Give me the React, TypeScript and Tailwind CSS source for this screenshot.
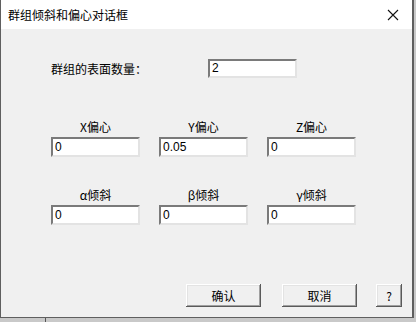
const cjk = "font-['Noto_Sans_CJK_SC','Liberation_Sans',sans-serif]";

function Field({ label, value }: { label: string; value: string }) {
  return (
    <div className="flex w-[89px] flex-col items-center">
      <span className={`h-[18px] text-[12px] leading-[18px] text-black ${cjk}`}>{label}</span>
      <div className="mt-[1px] h-[20px] w-[89px] border-2 border-t-[#7a7a7a] border-l-[#7a7a7a] border-r-[#e3e3e3] border-b-[#e3e3e3] bg-white pl-[2px] font-['Liberation_Sans',sans-serif] text-[12px] leading-[16px] text-black">
        {value}
      </div>
    </div>
  );
}

function Btn({ children, className }: { children: React.ReactNode; className: string }) {
  return (
    <button
      className={`h-[23px] bg-[#f0f0f0] text-[12px] leading-[23px] text-black shadow-[inset_-1px_-1px_#5a5a5a,inset_1px_1px_#ffffff,inset_-2px_-2px_#a0a0a0,inset_2px_2px_#e3e3e3] ${cjk} ${className}`}
    >
      {children}
    </button>
  );
}

export default function App() {
  return (
    <div className="flex h-[322px] w-[416px] flex-col bg-[#c9c9c9]">
      <div className="flex h-[318px] w-[414px] flex-col border-r-2 border-b border-l border-[#5f5f5f] bg-[#f0f0f0]">
        <div className="flex h-[29px] items-center justify-between bg-white pl-[7px] pr-[12px]">
          <span className={`text-[12px] text-black ${cjk}`}>群组倾斜和偏心对话框</span>
          <svg width="14" height="14" viewBox="0 0 14 14" className="mt-[1px]">
            <path d="M2 2 L12 12 M12 2 L2 12" stroke="#111" strokeWidth="1.1" />
          </svg>
        </div>

        <div className="flex flex-col pl-[50px]">
          <div className="mt-[30px] flex items-center">
            <span className={`w-[157px] text-[12px] text-black ${cjk}`}>群组的表面数量：</span>
            <div className="h-[19px] w-[89px] border-2 border-t-[#7a7a7a] border-l-[#7a7a7a] border-r-[#e3e3e3] border-b-[#e3e3e3] bg-white pl-[2px] font-['Liberation_Sans',sans-serif] text-[12px] leading-[15px] text-black">
              2
            </div>
          </div>

          <div className="mt-[40px] flex gap-[19px]">
            <Field label="X偏心" value="0" />
            <Field label="Y偏心" value="0.05" />
            <Field label="Z偏心" value="0" />
          </div>

          <div className="mt-[29px] flex gap-[19px]">
            <Field label="α倾斜" value="0" />
            <Field label="β倾斜" value="0" />
            <Field label="γ倾斜" value="0" />
          </div>
        </div>

        <div className="mt-[59px] flex pl-[185px]">
          <Btn className="w-[75px]">确认</Btn>
          <Btn className="ml-[21px] w-[75px]">取消</Btn>
          <Btn className="ml-[19px] w-[26px]">?</Btn>
        </div>
      </div>
      <div className="flex h-[4px]">
        <div className="w-[45px]" />
        <div className="w-[1px] bg-[#555]" />
      </div>
    </div>
  );
}
